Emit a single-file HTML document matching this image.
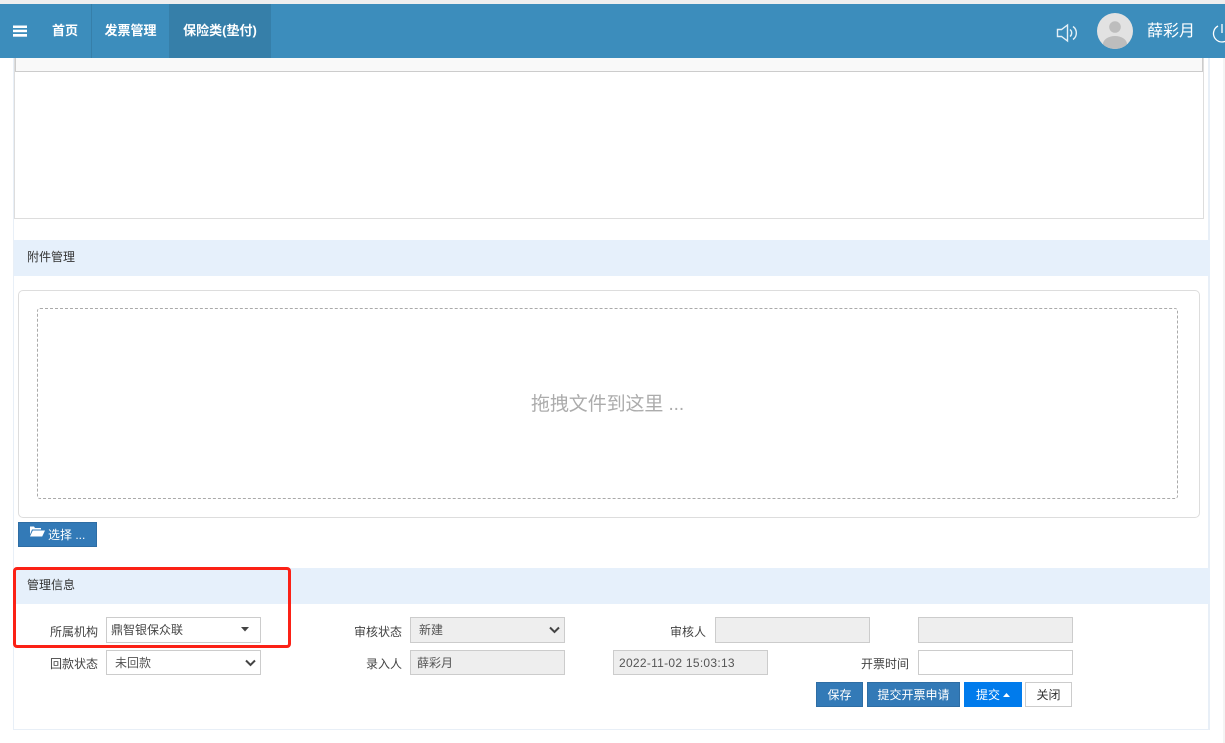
<!DOCTYPE html>
<html lang="zh-CN"><head><meta charset="utf-8"><title>保险类(垫付)</title>
<style>
html,body{margin:0;padding:0;width:1225px;height:743px;overflow:hidden;background:#fff}
body{position:relative;font-family:"Liberation Sans","Noto Sans CJK SC",sans-serif;font-size:12px;color:#444}
div,span{position:absolute;box-sizing:border-box;white-space:nowrap}
svg{position:absolute;display:block}
.nav{top:4px;height:54px;line-height:54px;color:#fff;font-weight:bold;font-size:13px;text-align:center}
.sec{left:14px;width:1196px;height:36px;background:#e6f0fb;line-height:35px;padding-left:13px;color:#333}
.lb{width:70px;text-align:right;height:18px;line-height:18px;color:#444}
.in{height:26px;border:1px solid #ccc;background:#eee;line-height:24px;color:#555;padding-left:6px}
.btn{top:682px;height:25px;line-height:24px;text-align:center;color:#fff;background:#337ab7;border:1px solid #2e6da4}
</style></head><body>
<div style="left:0;top:0;width:1225px;height:4px;background:#eeeeee"></div>
<div style="left:0;top:4px;width:1225px;height:54px;background:#3c8dbc"></div>
<div style="left:91px;top:4px;width:1px;height:54px;background:#367fa9"></div>
<div style="left:169px;top:4px;width:102px;height:54px;background:#367fa9"></div>
<svg style="left:13px;top:25px" width="14" height="12"><rect x="0" y="0.500" width="14" height="2.500" fill="#fff"/><rect x="0" y="4.700" width="14" height="2.500" fill="#fff"/><rect x="0" y="9" width="14" height="2.700" fill="#fff"/></svg>
<div class="nav" style="left:39px;width:52px">首页</div>
<div class="nav" style="left:92px;width:77px">发票管理</div>
<div class="nav" style="left:169px;width:102px">保险类(垫付)</div>
<svg style="left:1056px;top:23px" width="24" height="20" fill="none" stroke="#e4f0f7" stroke-width="1.400"><path d="M1.500 6.500h4l6-4.500v16l-6-4.500h-4z"/><path d="M14 6.500a4.500 4.500 0 0 1 0 7"/><path d="M17 3.500a8 8 0 0 1 0 13"/></svg>
<svg style="left:1097px;top:13px" width="36" height="36"><defs><clipPath id="c"><circle cx="18" cy="18" r="18"/></clipPath></defs><circle cx="18" cy="18" r="18" fill="#e2e2e2"/><circle cx="18" cy="14" r="5.800" fill="#bdbdbd"/><ellipse cx="18" cy="31" rx="12" ry="8" fill="#bdbdbd" clip-path="url(#c)"/></svg>
<div style="left:1147px;top:20px;height:24px;line-height:24px;font-size:16px;color:#fff">薛彩月</div>
<svg style="left:1212px;top:21px" width="13" height="24" fill="none" stroke="#fff" stroke-width="1.300"><path d="M10 3v9"/><path d="M6 5A8.500 8.500 0 1 0 14 5"/></svg>

<div style="left:13px;top:58px;width:1197px;height:672px;border:1px solid #e8eff7;border-top:0;border-right:2px solid #e8eff7"></div>
<div style="left:14px;top:58px;width:1190px;height:161px;border:1px solid #ddd;border-top:0;background:#fff"></div>
<div style="left:15px;top:58px;width:1188px;height:14px;background:#f9f9f9;border:1px solid #ccc;border-top:0"></div>

<div class="sec" style="top:240px">附件管理</div>
<div style="left:18px;top:290px;width:1182px;height:228px;border:1px solid #ddd;border-radius:5px"></div>
<div style="left:37px;top:308px;width:1141px;height:191px;border:1px dashed #aaa;border-radius:3px"></div>
<div style="left:531px;top:391px;height:28px;line-height:28px;font-size:19px;letter-spacing:-.1px;color:#acacac">拖拽文件到这里 ...</div>

<div style="left:18px;top:522px;width:79px;height:25px;background:#337ab7;border:1px solid #2e6da4;color:#fff;line-height:24px;padding-left:29px">选择 ...</div>
<svg style="left:29px;top:525px" width="17" height="13"><path d="M1 1.500h4l1 1.500h6v1.500h-9l-2 5zM3.800 5.500h12.200l-2.800 6h-12.200z" fill="#fff"/></svg>

<div class="sec" style="top:568px">管理信息</div>
<div style="left:13px;top:567px;width:278px;height:81px;border:3px solid #fb2116;border-radius:4px;z-index:3"></div>

<div class="lb" style="left:28px;top:623px">所属机构</div>
<div class="in" style="left:106px;top:617px;width:155px;background:#fff;padding-left:4px;color:#444">鼎智银保众联</div>
<svg style="left:241px;top:627px" width="8" height="5"><path d="M0 0h8L4 4.500z" fill="#444"/></svg>
<div class="lb" style="left:28px;top:655px">回款状态</div>
<div class="in" style="left:106px;top:650px;width:155px;height:25px;background:#fff;padding-left:8px">未回款</div>
<svg style="left:245px;top:659px" width="11" height="8" fill="none" stroke="#444" stroke-width="2"><path d="M1 1.500l4.500 4.500 4.500-4.500"/></svg>

<div class="lb" style="left:332px;top:623px">审核状态</div>
<div class="in" style="left:410px;top:617px;width:155px;padding-left:8px">新建</div>
<svg style="left:549px;top:626px" width="11" height="8" fill="none" stroke="#444" stroke-width="2"><path d="M1 1.500l4.500 4.500 4.500-4.500"/></svg>
<div class="lb" style="left:332px;top:655px">录入人</div>
<div class="in" style="left:410px;top:650px;width:155px;height:25px;padding-left:6px">薛彩月</div>

<div class="in" style="left:613px;top:650px;width:155px;height:25px;padding-left:5px;letter-spacing:.28px">2022-11-02 15:03:13</div>
<div class="lb" style="left:636px;top:623px">审核人</div>
<div class="in" style="left:715px;top:617px;width:155px"></div>
<div class="in" style="left:918px;top:617px;width:155px"></div>
<div class="lb" style="left:839px;top:655px">开票时间</div>
<div class="in" style="left:918px;top:650px;width:155px;height:25px;background:#fff"></div>

<div class="btn" style="left:816px;width:47px">保存</div>
<div class="btn" style="left:867px;width:93px">提交开票申请</div>
<div class="btn" style="left:964px;width:58px;background:#007bec;border-color:#007bec;padding-right:10px">提交</div>
<svg style="left:1003px;top:693px" width="7" height="4"><path d="M0 4h7L3.500 0z" fill="#fff"/></svg>
<div class="btn" style="left:1025px;width:47px;background:#fff;border-color:#ccc;color:#333">关闭</div>
<div style="left:1223px;top:58px;width:2px;height:685px;background:#f4f4f4"></div>
</body></html>
